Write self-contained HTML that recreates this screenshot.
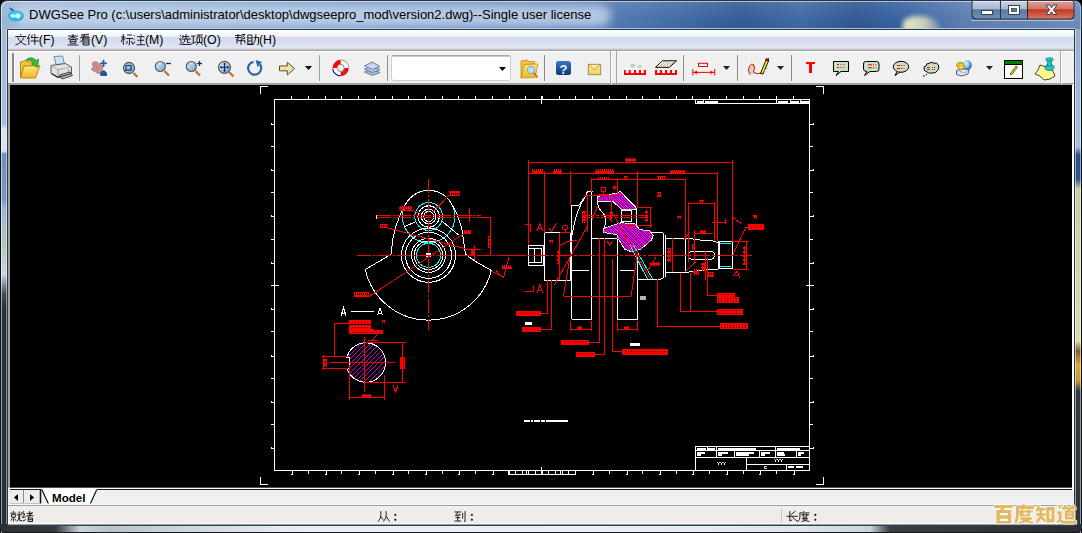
<!DOCTYPE html>
<html><head><meta charset="utf-8">
<style>
*{box-sizing:border-box}
html,body{margin:0;padding:0}
body{width:1082px;height:533px;overflow:hidden;position:relative;background:#000;font-family:"Liberation Sans",sans-serif}
.a{position:absolute}
#title{left:0;top:0;width:1082px;height:30px;border-radius:7px 7px 0 0;overflow:hidden;background:linear-gradient(90deg,#9ab4d6 0px,#86a4ce 200px,#6a8ec2 420px,#5a80b8 560px,#4670aa 650px,#2e5894 740px,#3c66a2 800px,#2c5490 855px,#3560a0 900px,#5a7cb0 965px,#6a88b8 1082px);border:1px solid #283548;border-bottom:none;box-shadow:inset 1px 1px 0 rgba(255,255,255,.55),inset -1px 0 0 rgba(255,255,255,.4)}
#title .hl{left:0;top:0;width:100%;height:100%;border-radius:7px 7px 0 0;background:linear-gradient(180deg,rgba(255,255,255,.12),rgba(255,255,255,.03) 60%,rgba(0,0,0,0))}
#ttext{left:29px;top:7px;font-size:13px;color:#000;white-space:nowrap;letter-spacing:0px}
#lframe{left:0;top:29px;width:8px;height:504px;background:linear-gradient(90deg,#0e1014 0,#0e1014 .8px,rgba(255,255,255,.55) .8px,rgba(255,255,255,.55) 1.9px,rgba(255,255,255,0) 1.9px,rgba(255,255,255,0) 5.8px,rgba(255,255,255,.45) 5.8px,rgba(255,255,255,.45) 7px,#223048 7px,#223048 8px),linear-gradient(180deg,#a2bcd9 0,#a6bedb 95px,#dce6f0 100px,#d8e2ee 122px,#7090b8 125px,#7a98c0 170px,#9ab8d8 180px,#b0c8b8 215px,#c6d6e4 245px,#444c54 265px,#283038 280px,#283038 504px)}
#rframe{left:1074px;top:29px;width:8px;height:504px;background:linear-gradient(90deg,#1a2028 0,#1a2028 .5px,rgba(255,255,255,.5) .5px,rgba(255,255,255,.5) 2px,rgba(255,255,255,0) 2px,rgba(255,255,255,0) 6px,rgba(255,255,255,.5) 6px,rgba(255,255,255,.5) 7.3px,#0e1014 7.3px),linear-gradient(180deg,#94aed0 0,#a9c0da 118px,#2c4f86 126px,#30558a 150px,#c9cda0 160px,#d8dab0 290px,#dcdcb0 312px,#806030 322px,#d8a838 336px,#c89830 352px,#343840 362px,#30343a 504px)}
#bframe{left:0;top:524px;width:1082px;height:9px;background:linear-gradient(90deg,#2c3036 0,#33383e 55px,#c8d2dc 80px,#b8c4cc 110px,#d0dae4 200px,#e8eef6 300px,#eaf0f8 600px,#dde6ee 800px,#c8d4de 870px,#3a3e44 890px,#2a2e34 1082px);border-radius:0 0 6px 6px;border-bottom:1.5px solid #15181c}
#client{left:7px;top:29px;width:1068px;height:497px;background:#f0f0f0;border:1px solid #2a3a55}
#menubar{left:8px;top:30px;width:1066px;height:19px;background:linear-gradient(180deg,#fff 0,#fbfcfe 2px,#eef1f8 7px,#d1d9ec 7.5px,#dfe6f5 18px)}
#menusep{left:8px;top:48px;width:1066px;height:3px;background:linear-gradient(180deg,#c5c9d6 0,#e8eaf0 1px,#a0a0a0 2px)}
#toolbar{left:8px;top:51px;width:1066px;height:33px;background:#f0f0f0;border-top:1px solid #fff}
.menu{top:31.5px;font-size:12.3px;color:#000;white-space:nowrap}
#canvas{left:8px;top:83px;width:1066px;height:405px;background:#000;border-left:2px solid #a0a0a0;border-top:2px solid #a0a0a0;border-right:2px solid #fff}
#tabbar{left:8px;top:488px;width:1066px;height:18px;background:#f0f0f0}
#status{left:8px;top:506px;width:1066px;height:19px;background:#f0eded;border-top:1px solid #a0a0a0}
.st{top:509px;font-size:12px;color:#000;white-space:nowrap}
#glow{left:12px;top:4px;width:598px;height:22px;border-radius:11px;background:rgba(200,216,236,.8);filter:blur(5px)}
#blob{left:902px;top:15px;width:36px;height:18px;border-radius:45% 60% 0 0;background:linear-gradient(90deg,rgba(245,242,200,.95),rgba(235,232,190,.8) 60%,rgba(200,210,200,.3));filter:blur(2.5px)}
</style></head><body>
<div id="title" class="a"><div class="hl a"></div><div id="glow" class="a"></div><div id="blob" class="a"></div></div>
<div id="ttext" class="a">DWGSee Pro (c:\users\administrator\desktop\dwgseepro_mod\version2.dwg)--Single user license</div>
<div id="lframe" class="a"></div>
<div id="rframe" class="a"></div>
<div id="bframe" class="a"></div>
<div id="client" class="a"></div>
<div class="a" style="left:7px;top:27.5px;width:1068px;height:1.3px;background:rgba(190,210,235,.85)"></div>
<div id="menubar" class="a"></div>
<div id="menusep" class="a"></div>
<div id="toolbar" class="a"></div>
<div id="canvas" class="a"></div>
<div id="tabbar" class="a"></div>
<div id="status" class="a"></div>

<svg class="a" style="left:0;top:0" width="1082" height="533" viewBox="0 0 1082 533">
<defs>
 <linearGradient id="gFold" x1="0" y1="0" x2="0" y2="1"><stop offset="0" stop-color="#ffe680"/><stop offset="1" stop-color="#f0b820"/></linearGradient>
 <linearGradient id="gLens" x1="0" y1="0" x2="1" y2="1"><stop offset="0" stop-color="#e8f2fa"/><stop offset="1" stop-color="#6b9cc8"/></linearGradient>
 <linearGradient id="gHelp" x1="0" y1="0" x2="0" y2="1"><stop offset="0" stop-color="#3a78c0"/><stop offset="1" stop-color="#0e3a78"/></linearGradient>
 <linearGradient id="gMail" x1="0" y1="0" x2="0" y2="1"><stop offset="0" stop-color="#fff2b0"/><stop offset="1" stop-color="#f0cc60"/></linearGradient>
 <pattern id="hatchY" width="3" height="3" patternUnits="userSpaceOnUse" patternTransform="rotate(45)"><rect width="1" height="3" fill="#a09010"/></pattern>
</defs>
<!-- toolbar grips/separators -->
<g stroke-width="1" shape-rendering="crispEdges">
 <line x1="12.5" y1="53" x2="12.5" y2="82" stroke="#8a8a8a" stroke-width="2"/>
 <line x1="14.5" y1="53" x2="14.5" y2="82" stroke="#fff"/>
 <line x1="79.5" y1="55" x2="79.5" y2="81" stroke="#a0a0a0"/>
 <line x1="319.5" y1="55" x2="319.5" y2="81" stroke="#a0a0a0"/>
 <line x1="387.5" y1="55" x2="387.5" y2="81" stroke="#8c8c8c"/>
 <line x1="544.5" y1="55" x2="544.5" y2="81" stroke="#8c8c8c"/>
 <line x1="610.5" y1="51" x2="610.5" y2="84" stroke="#a8a8a8"/>
 <line x1="611.5" y1="51" x2="611.5" y2="84" stroke="#fff"/>
 <line x1="616.5" y1="51" x2="616.5" y2="84" stroke="#a8a8a8"/>
 <line x1="683.5" y1="55" x2="683.5" y2="81" stroke="#8c8c8c"/>
 <line x1="737.5" y1="55" x2="737.5" y2="81" stroke="#8c8c8c"/>
 <line x1="791.5" y1="55" x2="791.5" y2="81" stroke="#8c8c8c"/>
 <line x1="1060.5" y1="51" x2="1060.5" y2="84" stroke="#a8a8a8"/>
 <line x1="1061.5" y1="51" x2="1061.5" y2="84" stroke="#fff"/>
</g>
<!-- open folder -->
<g>
 <path d="M20.5 62 L26 60.5 L29 62 L35 62 L36 66 L24 66 L20.5 78 Z" fill="#f2c43a" stroke="#b88a18" stroke-width="1"/>
 <path d="M24 66 L40 65.5 L35.5 78 L20.5 78 Z" fill="url(#gFold)" stroke="#b88a18" stroke-width="1"/>
 <path d="M26 60 Q31 55.5 36.5 60.5 L38.5 59 L37.5 67.5 L31.5 64 L34 62.5 Q31 59.5 26 60 Z" fill="#3cbf30" stroke="#1f8a20" stroke-width=".8"/>
</g>
<!-- printer -->
<g>
 <path d="M54 56.5 L62.5 56 L64.5 64 L56 64.5 Z" fill="#c8e0f8" stroke="#6a80a0" stroke-width=".9"/>
 <path d="M51 65.5 L65.5 63.5 L71.5 67 L71.5 74 L58 77.5 L51 73.5 Z" fill="#e4e4e4" stroke="#585858" stroke-width="1"/>
 <path d="M51.5 66 L58 69.5 L71 67.2" fill="none" stroke="#a8a8a8" stroke-width=".9"/>
 <path d="M58 69.5 L58 77.5" stroke="#8a8a8a" stroke-width=".9"/>
 <path d="M59.5 75 L70 72 L72.5 75.5 L62 79 Z" fill="#c8c8c8" stroke="#404040" stroke-width="1"/>
 <path d="M52 73.8 L58 77.3 L71 73.8" fill="none" stroke="#303030" stroke-width="1.1"/>
 <circle cx="68.5" cy="70.5" r=".9" fill="#30d030"/>
</g>
<!-- hand pan -->
<g>
 <path d="M92 63.5 Q94 60.5 97 62 L103 66.5 L101.5 73 L98 73.5 L92 70 Q90.5 68 93.5 68 Z" fill="#d09090" stroke="#a06060" stroke-width=".6"/>
 <path d="M93 63 L100 67 M92.5 65.5 L99.5 69 M92 68 L98 71" stroke="#b07070" stroke-width=".5"/>
 <path d="M101 71.5 L104 70 L107 73 L107 76 L100.5 76 L100 73.5 Z" fill="#1f5a9a"/>
 <path d="M103.5 60 L103.5 66.5 M100.5 63.3 L106.5 63.3" stroke="#1f5a9a" stroke-width="1.3"/>
 <path d="M103.5 59.5 L102 61.5 L105 61.5 Z M103.5 67 L102 65 L105 65 Z M100 63.3 L102 61.8 L102 64.8 Z M107 63.3 L105 61.8 L105 64.8 Z" fill="#1f5a9a"/>
</g>
<!-- zoom window -->
<g>
 <line x1="133.5" y1="73" x2="137.5" y2="77" stroke="#c07020" stroke-width="2.2"/>
 <circle cx="129" cy="68" r="5.5" fill="url(#gLens)" stroke="#505860" stroke-width="1.3"/>
 <rect x="126" y="65.5" width="5" height="4.5" fill="none" stroke="#1a3a78" stroke-width="1.3"/>
 <line x1="124.5" y1="71.5" x2="126.5" y2="69.5" stroke="#1a3a78" stroke-width="1"/>
</g>
<!-- zoom out -->
<g>
 <line x1="164.5" y1="71" x2="169" y2="75.5" stroke="#c07020" stroke-width="2.2"/>
 <circle cx="160.3" cy="66.5" r="5" fill="url(#gLens)" stroke="#585e66" stroke-width="1.2"/>
 <line x1="166" y1="63.5" x2="171" y2="63.5" stroke="#10306a" stroke-width="1.3"/>
</g>
<!-- zoom in -->
<g>
 <line x1="195.5" y1="71" x2="200" y2="75.5" stroke="#c07020" stroke-width="2.2"/>
 <circle cx="191.3" cy="66.5" r="5" fill="url(#gLens)" stroke="#585e66" stroke-width="1.2"/>
 <line x1="197" y1="63.5" x2="202" y2="63.5" stroke="#10306a" stroke-width="1.3"/>
 <line x1="199.5" y1="61" x2="199.5" y2="66" stroke="#10306a" stroke-width="1.3"/>
</g>
<!-- zoom pan -->
<g>
 <line x1="229" y1="72" x2="233.5" y2="76.5" stroke="#c07020" stroke-width="2.2"/>
 <circle cx="224.5" cy="67.3" r="6" fill="url(#gLens)" stroke="#585e66" stroke-width="1.2"/>
 <path d="M224.5 63 L224.5 71.5 M220.3 67.3 L228.7 67.3" stroke="#0a2a5a" stroke-width="1.1"/>
 <path d="M224.5 62.5 L223 64.3 L226 64.3 Z M224.5 72 L223 70.3 L226 70.3 Z M219.8 67.3 L221.6 65.8 L221.6 68.8 Z M229.2 67.3 L227.4 65.8 L227.4 68.8 Z" fill="#0a2a5a"/>
</g>
<!-- rotate -->
<g>
 <path d="M253.5 61.8 A6.5 6.5 0 1 0 260 64.5" fill="none" stroke="#2e64a0" stroke-width="2.2"/>
 <path d="M255.5 60 L262 62 L257.5 67 Z" fill="#2e64a0"/>
</g>
<!-- arrow -->
<g>
 <path d="M279.5 66 L287.3 66 L287.3 62.3 L294.5 68.5 L287.3 75 L287.3 70.8 L279.5 70.8 Z" fill="#ece4a8" stroke="#5a5020" stroke-width="1"/>
</g>
<!-- lifebuoy -->
<g>
 <circle cx="340.7" cy="67.9" r="5.9" fill="none" stroke="#fff" stroke-width="4.6"/>
 <path d="M332.6 67.9 A8.1 8.1 0 0 1 340.7 59.8 L340.7 64.2 A3.7 3.7 0 0 0 337 67.9 Z" fill="#f00"/>
 <path d="M348.8 67.9 A8.1 8.1 0 0 1 340.7 76 L340.7 71.6 A3.7 3.7 0 0 0 344.4 67.9 Z" fill="#f00"/>
 <path d="M332.7 68.5 A8 8 0 0 0 340.5 75.9" fill="none" stroke="#0000a0" stroke-width="1.1"/>
 <path d="M341 59.9 A8 8 0 0 1 348.7 67.5" fill="none" stroke="#909090" stroke-width="1"/>
 <circle cx="340.7" cy="67.9" r="3.6" fill="none" stroke="#707070" stroke-width=".8"/>
 <path d="M334.5 63 l2 -1.5 M343 73.5 l3 -3" stroke="#20a0a0" stroke-width=".9"/>
</g>
<!-- layers -->
<g stroke="#5a7090" stroke-width=".9" fill="#a8c0e0">
 <path d="M364.5 72 L372 69 L380 72.5 L372.5 75.5 Z"/>
 <path d="M364.5 69 L372 66 L380 69.5 L372.5 72.5 Z" fill="#b8cce8"/>
 <path d="M364.5 66 L372 62 L380 66.5 L372.5 69.5 Z" fill="#c8d8f0"/>
</g>
<!-- combo -->
<rect x="391.5" y="55.5" width="119" height="25" rx="2" fill="#fff" stroke="#c8d0dc"/>
<line x1="392" y1="55.8" x2="510" y2="55.8" stroke="#9a9a9a" stroke-width="1.2"/>
<!-- folder search -->
<g>
 <path d="M521 61 L527 60 L529 61.5 L534.5 61.5 L535 64 L525 64.5 L521 78 Z" fill="#f2c43a" stroke="#c09020" stroke-width=".8"/>
 <path d="M524.5 64.5 L538 64 L535 77.5 L521 78 Z" fill="url(#gFold)" stroke="#c09020" stroke-width=".8"/>
 <line x1="534" y1="73" x2="537.5" y2="77.5" stroke="#c07020" stroke-width="2"/>
 <circle cx="531" cy="70" r="3.6" fill="#bde0f5" stroke="#5aa0d0" stroke-width=".8"/>
</g>
<!-- help -->
<g>
 <rect x="556" y="61" width="15" height="14" rx="2.5" fill="url(#gHelp)"/>
 <text x="563.5" y="73.5" font-family="Liberation Sans" font-weight="bold" font-size="13" fill="#e8f4ff" text-anchor="middle">?</text>
</g>
<!-- mail -->
<g>
 <rect x="588.3" y="64.3" width="12.4" height="10.4" fill="url(#gMail)" stroke="#a08040" stroke-width=".9"/>
 <path d="M588.5 64.5 L594.5 70 L600.5 64.5" fill="none" stroke="#b08840" stroke-width=".8"/>
</g>
<!-- ruler 1 -->
<g fill="#f00">
 <path d="M624 70 L625.7 70 L625.7 73 L628.9 73 L628.9 70 L630.8 70 L630.8 73 L634 73 L634 70 L636 70 L636 73 L639 73 L639 70 L641 70 L641 73 L643.8 73 L643.8 70 L646 70 L646 75 L624 75 Z"/>
 <path d="M629.5 65.6 L632.5 63.3 L636 65.6 L632.5 68 Z M637 66.4 L639.6 64.8 L642.5 66.4 L639.6 68 Z" fill="#b8d4b8"/>
</g>
<!-- ruler 2 -->
<g>
 <path d="M655 70 L657 70 L657 73 L660 73 L660 70 L662 70 L662 73 L665 73 L665 70 L667 70 L667 73 L670 73 L670 70 L672 70 L672 73 L675 73 L675 70 L677 70 L677 75 L655 75 Z" fill="#f00"/>
 <path d="M662.5 60.8 L676.5 60.8 L669.5 67.3 L655.5 67.3 Z" fill="#fff" stroke="#000" stroke-width="1"/>
 <path d="M660 66.5 L665 61.5 M663 66.5 L668 61.5 M666 66.5 L671 61.5 M669 66.5 L674 61.5" stroke="#a09010" stroke-width=".9"/>
</g>
<!-- dimension -->
<g stroke="#f00" fill="none">
 <rect x="698.5" y="63.3" width="9" height="3.2" stroke-width="1"/>
 <line x1="693" y1="72.4" x2="714.5" y2="72.4" stroke-width="1"/>
 <line x1="692.8" y1="69" x2="692.8" y2="75.5" stroke-width="1"/>
 <line x1="714.7" y1="69" x2="714.7" y2="75.5" stroke-width="1"/>
 <path d="M693.5 72.4 L697 70.5 L697 74.3 Z M714 72.4 L710.5 70.5 L710.5 74.3 Z" fill="#f00" stroke="none"/>
</g>
<!-- sketch pen -->
<g>
 <path d="M750 74.5 Q747 71 749.5 66 Q752 62.5 754 65 Q755 70 753.5 72 Q757 75 761 73" fill="#c0dcc0" stroke="#f00" stroke-width="1"/>
 <path d="M760.5 73.5 L766 60 L768.5 61 L763 74 Z" fill="#f5f000" stroke="#000" stroke-width=".9"/>
 <path d="M765.5 59 L768.8 58.5 L768.5 61 L766 60 Z" fill="#f00" stroke="#000" stroke-width=".6"/>
 <line x1="763.5" y1="71" x2="767.5" y2="68" stroke="#a0a0a0" stroke-width="1"/>
</g>
<!-- T -->
<path d="M806 62 L815 62 L815 64 L812 64 L812 73 L809 73 L809 64 L806 64 Z" fill="#f00"/>
<!-- bubble 1 -->
<g>
 <path d="M833.5 61.5 L848.5 61.5 L848.5 71.5 L841 71.5 L836 75.5 L838.5 71.5 L833.5 71.5 Z" fill="#c6e2c6" stroke="#000" stroke-width="1"/>
 <g fill="#f00"><rect x="837" y="64" width="2" height="1"/><rect x="840.5" y="64" width="1" height="1"/><rect x="843.5" y="64" width="1" height="1"/><rect x="837" y="67" width="2" height="1"/><rect x="840.5" y="67" width="1" height="1"/><rect x="843.5" y="67" width="1" height="1"/></g>
</g>
<!-- bubble 2 -->
<g>
 <path d="M865.5 61.5 L876.5 61.5 Q879 61.5 879 64 L879 69 Q879 71.5 876.5 71.5 L870 71.5 L864.5 75.5 L867 71.5 Q863.5 71.5 863.5 69 L863.5 64 Q863.5 61.5 865.5 61.5 Z" fill="#c6e2c6" stroke="#000" stroke-width="1"/>
 <g fill="#f00"><rect x="868" y="64.3" width="4" height="1"/><rect x="873" y="64.3" width="1" height="1"/><rect x="875.5" y="64.3" width="1" height="1"/><rect x="868" y="67.3" width="4" height="1"/><rect x="873" y="67.3" width="1" height="1"/><rect x="875.5" y="67.3" width="1" height="1"/></g>
</g>
<!-- bubble 3 -->
<g>
 <ellipse cx="901" cy="66.8" rx="7.7" ry="5.5" fill="#c6e2c6" stroke="#000" stroke-width="1"/>
 <path d="M897 71.5 L895 75.5 L900 72" fill="#c6e2c6" stroke="#000" stroke-width="1"/>
 <g fill="#f00"><rect x="897" y="65" width="3" height="1"/><rect x="901" y="65" width="1" height="1"/><rect x="903.5" y="65" width="1" height="1"/><rect x="897" y="68" width="3" height="1"/><rect x="901" y="68" width="1" height="1"/><rect x="903.5" y="68" width="1" height="1"/></g>
</g>
<!-- cloud -->
<g>
 <path d="M926 66 Q926 63 929 63.5 Q931 61.5 933.5 63 Q937 62.5 938.5 65 Q939.5 68 937.5 70.5 Q936 73.5 932 73 Q929.5 74 927 72 Q923.5 71 924 68 Q923.5 66.5 926 66 Z" fill="#c6e2c6" stroke="#000" stroke-width="1"/>
 <g fill="#f00"><rect x="927" y="67" width="3" height="1"/><rect x="932" y="67" width="1" height="1"/><rect x="934" y="67" width="1" height="1"/><rect x="927" y="69" width="3" height="1"/><rect x="932" y="69" width="1" height="1"/><rect x="934" y="69" width="1" height="1"/></g>
 <circle cx="926.5" cy="74.5" r=".7" fill="#000"/><circle cx="924" cy="76" r=".8" fill="#000"/>
</g>
<!-- stamp globe -->
<g>
 <defs><radialGradient id="gGlobe" cx=".35" cy=".35" r=".7"><stop offset="0" stop-color="#e8fcff"/><stop offset=".5" stop-color="#70c8f0"/><stop offset="1" stop-color="#1a5a80"/></radialGradient></defs>
 <ellipse cx="967.3" cy="65.2" rx="4.4" ry="5" fill="url(#gGlobe)"/>
 <path d="M956.5 70.5 L963 68.5 L969 70 L968 74 L962 76 L956.5 74.5 Z" fill="#e0e6f4" stroke="#404a80" stroke-width=".9"/>
 <path d="M959 71 L963.5 73 L967.5 71.5" fill="none" stroke="#8090b8" stroke-width=".7"/>
 <path d="M957 63.5 L960 62 L962 62.5 L964 63.5 L964.5 66.5 L963.5 69.5 L960.5 70 L958 68 L956.5 66 Z" fill="#e0b818" stroke="#a07a08" stroke-width=".6"/>
 <path d="M959.8 64.5 h.9 M962 64.5 h.9 M959.5 66.8 q1.7 1 3.3 0" stroke="#fff" stroke-width=".9" fill="none"/>
</g>
<!-- green box -->
<g>
 <rect x="1004.5" y="60.5" width="18" height="18" fill="#fff" stroke="#000" stroke-width="1"/>
 <rect x="1005" y="61" width="17" height="3" fill="#008000"/>
 <line x1="1005" y1="64.5" x2="1022" y2="64.5" stroke="#000" stroke-width="1"/>
 <path d="M1010.5 73.5 L1016 66 L1017.5 67 L1012 74.5 Z" fill="#f0e000" stroke="#000" stroke-width=".6"/>
 <path d="M1010 75 L1010.5 73.5 L1012 74.5 Z" fill="#f00"/>
</g>
<!-- pushpin note -->
<g>
 <path d="M1040 65 L1046 67 L1053 71 L1055 76 L1050 79 L1044 80 L1040 76 L1035 74 L1038 70 Z" fill="#fafa90" stroke="#000" stroke-width=".7"/>
 <ellipse cx="1049.5" cy="67.5" rx="4.5" ry="3" fill="#20c8c8" stroke="#006060" stroke-width=".7"/>
 <rect x="1047.5" y="60" width="4" height="6" fill="#20c8c8" stroke="#006060" stroke-width=".6"/>
 <ellipse cx="1049.5" cy="59.5" rx="3.8" ry="1.8" fill="#20c8c8" stroke="#006060" stroke-width=".6"/>
</g>
<!-- dropdown triangles -->
<g fill="#000">
 <path d="M305 66 L312 66 L308.5 70 Z"/>
 <path d="M499 67 L506 67 L502.5 71 Z"/>
 <path d="M723 66 L730 66 L726.5 70 Z" fill="#222"/>
 <path d="M777 66 L784 66 L780.5 70 Z" fill="#222"/>
 <path d="M986 66 L993 66 L989.5 70 Z" fill="#222"/>
</g>
</svg>
<svg class="a" style="left:960px;top:0" width="122" height="30" viewBox="960 0 122 30">
<defs>
 <linearGradient id="gBtn" x1="0" y1="0" x2="0" y2="1"><stop offset="0" stop-color="#c4d2e4"/><stop offset=".45" stop-color="#a8bad2"/><stop offset=".5" stop-color="#5c7aa2"/><stop offset="1" stop-color="#6e8cb4"/></linearGradient>
 <linearGradient id="gClose" x1="0" y1="0" x2="0" y2="1"><stop offset="0" stop-color="#e0a098"/><stop offset=".45" stop-color="#d07868"/><stop offset=".5" stop-color="#c03820"/><stop offset="1" stop-color="#d87860"/></linearGradient>
</defs>
<path d="M971.5 0.5 L1074.5 0.5 L1074.5 15 Q1074.5 19.5 1070 19.5 L976 19.5 Q971.5 19.5 971.5 15 Z" fill="#2a3448"/>
<path d="M972.5 1 L1000 1 L1000 18.5 L977 18.5 Q972.5 18.5 972.5 14 Z" fill="url(#gBtn)"/>
<path d="M1001 1 L1027 1 L1027 18.5 L1001 18.5 Z" fill="url(#gBtn)"/>
<path d="M1028 1 L1073.5 1 L1073.5 14 Q1073.5 18.5 1069 18.5 L1028 18.5 Z" fill="url(#gClose)"/>
<path d="M974 1.5 L999.5 1.5 M1001.5 1.5 L1026.5 1.5 M1028.5 1.5 L1072 1.5" stroke="rgba(255,255,255,.7)" stroke-width="1"/>
<line x1="1000.5" y1="1" x2="1000.5" y2="19" stroke="#2a3448"/>
<line x1="1027.5" y1="1" x2="1027.5" y2="19" stroke="#3a2020"/>
<rect x="981.5" y="10.5" width="11" height="4" fill="#fff" stroke="#3a4050" stroke-width="1"/>
<rect x="1008.5" y="5.5" width="11" height="9" fill="#fff" stroke="#3a4050" stroke-width="1"/>
<rect x="1011.5" y="8.5" width="5" height="3" fill="#6080a8" stroke="#3a4050" stroke-width=".8"/>
<path d="M1046 5 L1049.6 5 L1051.5 7.8 L1053.4 5 L1057 5 L1053.4 9.8 L1057 14.5 L1053.4 14.5 L1051.5 11.8 L1049.6 14.5 L1046 14.5 L1049.6 9.8 Z" fill="#fff" stroke="#404048" stroke-width="1"/>
<path d="M971.5 19.5 L1074.5 19.5" stroke="rgba(255,255,255,.5)" stroke-width="1" transform="translate(0,1)"/>
</svg>
<svg class="a" style="left:6px;top:6px" width="20" height="18" viewBox="6 6 20 18">
 <line x1="10.5" y1="8.5" x2="15" y2="12.5" stroke="#3060d0" stroke-width="2" stroke-linecap="round"/>
 <ellipse cx="16" cy="16" rx="8" ry="5.5" fill="#28b8e8"/>
 <ellipse cx="16" cy="15" rx="6" ry="3" fill="#60d0f0" opacity=".7"/>
 <path d="M10.5 16 L20 16 M12 14 L12 18 M14 14.5 Q15.5 16 14 17.5 M18 13.5 L18 18.5" stroke="#fff" stroke-width="1.1" fill="none"/>
 <circle cx="18" cy="16" r="1.8" fill="none" stroke="#fff" stroke-width="1"/>
</svg>
<svg class="a" style="left:0;top:0" width="1082" height="533" viewBox="0 0 1082 533" shape-rendering="crispEdges">
<defs><pattern id="txtpat" width="3" height="2.4" patternUnits="userSpaceOnUse"><rect x="1" y="0.6" width="1" height="1.1" fill="#000"/></pattern><pattern id="txtpat2" width="2" height="4" patternUnits="userSpaceOnUse"><rect x="0" y="0" width="1" height="4" fill="#f00"/><rect x="1" y="0" width="1" height="1" fill="#f00"/><rect x="1" y="3" width="1" height="1" fill="#f00"/></pattern></defs>
<g id="frame" fill="none" stroke="#fff" stroke-width="1">
 <rect x="274.5" y="99.5" width="535" height="371"/>
 <path d="M260.5 93.5 V86.5 H268"/>
 <path d="M816 86.5 H823.5 V94"/>
 <path d="M260.5 477 V484.5 H268"/>
 <path d="M816 484.5 H823.5 V477"/>
 <g id="ticks"><path d="M308.5 96.0 V99.5 M308.5 470.5 V474.0 M341.5 96.0 V99.5 M341.5 470.5 V474.0 M375.5 96.0 V99.5 M375.5 470.5 V474.0 M408.5 96.0 V99.5 M408.5 470.5 V474.0 M442.5 96.0 V99.5 M442.5 470.5 V474.0 M475.5 96.0 V99.5 M475.5 470.5 V474.0 M509.5 96.0 V99.5 M509.5 470.5 V474.0 M542.5 96.0 V99.5 M542.5 470.5 V474.0 M575.5 96.0 V99.5 M575.5 470.5 V474.0 M609.5 96.0 V99.5 M609.5 470.5 V474.0 M642.5 96.0 V99.5 M642.5 470.5 V474.0 M676.5 96.0 V99.5 M676.5 470.5 V474.0 M709.5 96.0 V99.5 M709.5 470.5 V474.0 M743.5 96.0 V99.5 M743.5 470.5 V474.0 M776.5 96.0 V99.5 M776.5 470.5 V474.0 M290.5 96.0 L291.5 96.0 V99.5 M290.5 474.0 H292.5 V470.5 M324.5 96.0 L325.5 96.0 V99.5 M324.5 474.0 H326.5 V470.5 M357.5 96.0 L358.5 96.0 V99.5 M357.5 474.0 H359.5 V470.5 M391.5 96.0 L392.5 96.0 V99.5 M391.5 474.0 H393.5 V470.5 M424.5 96.0 L425.5 96.0 V99.5 M424.5 474.0 H426.5 V470.5 M457.5 96.0 L458.5 96.0 V99.5 M457.5 474.0 H459.5 V470.5 M491.5 96.0 L492.5 96.0 V99.5 M491.5 474.0 H493.5 V470.5 M524.5 96.0 L525.5 96.0 V99.5 M524.5 474.0 H526.5 V470.5 M558.5 96.0 L559.5 96.0 V99.5 M558.5 474.0 H560.5 V470.5 M591.5 96.0 L592.5 96.0 V99.5 M591.5 474.0 H593.5 V470.5 M625.5 96.0 L626.5 96.0 V99.5 M625.5 474.0 H627.5 V470.5 M658.5 96.0 L659.5 96.0 V99.5 M658.5 474.0 H660.5 V470.5 M691.5 96.0 L692.5 96.0 V99.5 M691.5 474.0 H693.5 V470.5 M725.5 96.0 L726.5 96.0 V99.5 M725.5 474.0 H727.5 V470.5 M758.5 96.0 L759.5 96.0 V99.5 M758.5 474.0 H760.5 V470.5 M792.5 96.0 L793.5 96.0 V99.5 M792.5 474.0 H794.5 V470.5 M271.0 146.5 H274.5 M809.5 146.5 H813.0 M271.0 192.5 H274.5 M809.5 192.5 H813.0 M271.0 239.5 H274.5 M809.5 239.5 H813.0 M271.0 285.5 H274.5 M809.5 285.5 H813.0 M271.0 331.5 H274.5 M809.5 331.5 H813.0 M271.0 378.5 H274.5 M809.5 378.5 H813.0 M271.0 424.5 H274.5 M809.5 424.5 H813.0 M271.0 122.5 V124.5 H274.5 M813.0 122.5 V124.5 H809.5 M271.0 168.5 V170.5 H274.5 M813.0 168.5 V170.5 H809.5 M271.0 214.5 V216.5 H274.5 M813.0 214.5 V216.5 H809.5 M271.0 261.5 V263.5 H274.5 M813.0 261.5 V263.5 H809.5 M271.0 307.5 V309.5 H274.5 M813.0 307.5 V309.5 H809.5 M271.0 354.5 V356.5 H274.5 M813.0 354.5 V356.5 H809.5 M271.0 400.5 V402.5 H274.5 M813.0 400.5 V402.5 H809.5 M271.0 446.5 V448.5 H274.5 M813.0 446.5 V448.5 H809.5 M541.5 96 V103.5 M541.5 467 V474.5 M270.5 285.5 H278.5 M805.5 285.5 H813.5"/><path d="M508.5 470.5 V474.5 H575.5 V470.5 M515.5 470.5 V474.5 M522.5 470.5 V474.5 M528.5 470.5 V474.5 M535.5 470.5 V474.5 M542.5 470.5 V474.5 M548.5 470.5 V474.5 M555.5 470.5 V474.5 M562.5 470.5 V474.5 M568.5 470.5 V474.5"/></g>
</g>














<!--BODY--><!-- title blocks -->
<g fill="none" stroke="#fff" stroke-width="1">
 <path d="M695.5 99.5 V103.8 H809.5 M703.5 99.5 V103.8 M776.5 99.5 V103.8 M790.5 99.5 V103.8 M800.5 99.5 V103.8"/>
 <path d="M695.5 470.5 V446.5 H809.5 M695.5 450.5 H809.5 M695.5 457.5 H809.5 M746.5 464.5 H809.5 M746.5 457.5 V470.5 M786.5 464.5 V470.5"/>
 <path d="M707.5 446.5 V450.5 M716.5 446.5 V457.5 M775.5 446.5 V457.5 M734.5 450.5 V457.5 M759.5 450.5 V457.5 M796.5 450.5 V457.5"/>
</g>
<g fill="#fff">
 <rect x="697" y="101" width="6" height="2"/><rect x="705" y="101" width="13" height="2"/><rect x="778" y="101" width="10" height="2"/><rect x="791" y="101" width="8" height="2"/><rect x="801" y="101" width="8" height="2"/>
 <rect x="697" y="448" width="9" height="2"/><rect x="708" y="448" width="7" height="2"/><rect x="718" y="448" width="38" height="2"/><rect x="777" y="448" width="23" height="2"/>
 <rect x="697" y="452" width="8" height="2"/><rect x="697" y="454" width="4" height="2"/><rect x="718" y="452" width="10" height="2"/><rect x="718" y="454" width="4" height="2"/>
 <rect x="736" y="452" width="18" height="2"/><rect x="736" y="454" width="13" height="2"/><rect x="761" y="452" width="9" height="2"/><rect x="761" y="454" width="4" height="2"/>
 <rect x="777" y="452" width="7" height="2"/><rect x="777" y="454" width="8" height="2"/><rect x="798" y="452" width="6" height="2"/><rect x="798" y="454" width="3" height="2"/>
 <rect x="788" y="466" width="6" height="2"/><rect x="796" y="466" width="7" height="2"/>
</g>
<g fill="none" stroke="#fff" stroke-width=".8">
 <path d="M717.5 461.5 l2 3 m0 -3 l-2 3 M720.5 461.5 l2 3 m0 -3 l-2 3 M723.5 461.5 l2 3 m0 -3 l-2 3"/>
 <path d="M774.5 458.5 l2 3 m0 -3 l-2 3 M777.5 458.5 l2 3 m0 -3 l-2 3 M780.5 458.5 l2 3 m0 -3 l-2 3"/>
 <path d="M766.5 466 h-2 v2.5 h2"/>
</g>
<!-- bottom center note -->
<g fill="#fff"><rect x="524" y="420" width="6" height="1.6"/><rect x="531" y="420" width="2" height="1.6"/><rect x="534" y="420" width="6" height="1.6"/><rect x="541" y="420" width="4" height="1.6"/><rect x="546" y="420" width="22" height="1.8"/></g>

<!-- ================= SIDE VIEW ================= -->
<g fill="none" stroke="#00ffff" stroke-width="1">
 <circle cx="428.7" cy="216.5" r="26.2"/>
 <circle cx="428.7" cy="216.5" r="13.9"/>
 <circle cx="428.5" cy="255.3" r="12"/>
</g>
<g fill="none" stroke="#fff" stroke-width="1">
 <!-- outer profile -->
 <path d="M365.3 269.6 L391 254.3 L392.8 239 L396 226 L401 213 L405.0 205.4 L407.2 201.5 L410.2 198.0 L413.7 195.0 L417.6 192.8 L421.9 191.2 L426.4 190.4 L431.0 190.4 L435.5 191.2 L439.8 192.8 L443.7 195.0 L447.2 198.0 L450.2 201.5 L452.4 205.4 L457 214 L461.5 227 L463.5 240 L465.5 254.3 L474.7 260.9 L491.2 270.4"/>
 <path d="M365.3 269.6 A64.6 64.6 0 0 0 491.2 270.4"/>
 <!-- circles around upper pin -->
 <circle cx="428.7" cy="216.5" r="10.7"/>
 <circle cx="428.7" cy="216.5" r="7.3"/>
 <circle cx="428.7" cy="216.5" r="5"/>
 <!-- circles around main journal -->
 <circle cx="428.5" cy="255.3" r="27"/>
 <circle cx="428.5" cy="255.3" r="23"/>
 <circle cx="428.5" cy="255.3" r="17"/>
 <circle cx="428.5" cy="255.3" r="14.3"/>
 <!-- chords -->
 <path d="M404.5 226.7 L414.6 222.2 M441.9 221.1 L458.7 235"/>
 <path d="M376.5 214.5 v4"/>
 <!-- A-A label -->
 <path d="M341 315.5 L343.5 308 L346 315.5 M342 313 H345 M377.5 315.5 L380 308 L382.5 315.5 M378.5 313 H381.5"/>
 <path d="M350.5 311.6 H374"/>
</g>
<rect x="426" y="253" width="5" height="4" fill="#fff"/>
<g fill="none" stroke="#f00" stroke-width="1">
 <path d="M428.6 179 V330" stroke-dasharray="14 2 2 2"/>
 <path d="M376.5 215.6 H480.7" stroke-dasharray="14 2 2 2"/>
 <path d="M376.5 217.6 H492.5" stroke-dasharray="14 2 2 2"/>
 <path d="M356.5 255.5 H510.7" stroke-dasharray="14 2 2 2"/>
 <path d="M490.3 217.6 V255.5"/>
 <path d="M469 208 v14 M466 215 h6"/>
 <path d="M474.5 245 V260 M465 249.4 H480.8"/>
 <path d="M388 228 L467.8 249.4"/>
 <path d="M412 210 L420 213.5 M399 210 H412"/>
 <path d="M369.7 296.3 L464.1 233.5 H471 M354 296.5 H369.7"/>
 <path d="M449 195 L432 213 M449 195 H460"/>
 <path d="M491.2 271 L504 277.7 M509 256.9 L503.4 278.3 M496 270 L500 276"/>
 <path d="M374 329.5 H349"/>
</g>
<g fill="#f00">
 <g><rect x="399" y="206" width="13" height="4" fill="url(#txtpat2)"/><rect x="380" y="224" width="8" height="4" fill="url(#txtpat2)"/><rect x="449" y="191" width="11" height="4" fill="url(#txtpat2)"/><rect x="464" y="229.5" width="7" height="4" fill="url(#txtpat2)"/><rect x="487.5" y="236" width="3.5" height="12" fill="url(#txtpat2)"/><rect x="502" y="265" width="10" height="4" fill="url(#txtpat2)"/></g>
 <rect x="471" y="250" width="3" height="6"/>
</g>

<!-- ================= SECTION A-A ================= -->
<g>
 <clipPath id="secClip"><path d="M346.9 357.2 H349.5 V368.6 H347.1 A19.7 19.7 0 1 0 346.9 357.2 Z"/></clipPath>
 <g clip-path="url(#secClip)" stroke="#ff00ff" stroke-width=".75">
  <path d="M300.0 400 L380.0 320 M304.6 400 L384.6 320 M309.2 400 L389.2 320 M313.8 400 L393.8 320 M318.4 400 L398.4 320 M323.0 400 L403.0 320 M327.6 400 L407.6 320 M332.2 400 L412.2 320 M336.8 400 L416.8 320 M341.4 400 L421.4 320 M346.0 400 L426.0 320 M350.6 400 L430.6 320 M355.2 400 L435.2 320 M359.8 400 L439.8 320 M364.4 400 L444.4 320 M369.0 400 L449.0 320 M373.6 400 L453.6 320 M378.2 400 L458.2 320 M382.8 400 L462.8 320 M387.4 400 L467.4 320 M392.0 400 L472.0 320 M396.6 400 L476.6 320 M401.2 400 L481.2 320 M405.8 400 L485.8 320 M410.4 400 L490.4 320 M415.0 400 L495.0 320 M419.6 400 L499.6 320 M424.2 400 L504.2 320 M428.8 400 L508.8 320 M433.4 400 L513.4 320"/>
 </g>
 <path d="M346.9 357.2 H349.5 V368.6 H347.1 A19.7 19.7 0 1 0 346.9 357.2 Z" fill="none" stroke="#fff" stroke-width="1"/>
</g>
<g fill="none" stroke="#f00" stroke-width="1">
 <path d="M364.7 337 V392 M330 362.4 H395"/>
 <path d="M364 342.3 H406 M364 382.6 H406 M402.9 342.3 V382.6"/>
 <path d="M349.2 365 V400 M384.3 375 V400 M349.2 397 H384.3"/>
 <path d="M322.4 356.8 H348 M322.4 368 H348 M323.5 355 V370"/>
 <path d="M334.8 323.3 H349 M334.8 323.3 V357"/>
 <path d="M371 341 L378 334 M368 340 H378"/>
 <path d="M393 385 L395.6 392 L398 385 M393.5 388.5 H397.5"/>
</g>
<g fill="#f00">
 <rect x="349" y="320" width="22" height="4"/><rect x="350" y="321" width="20" height="2" fill="url(#txtpat)"/>
 <rect x="349" y="325" width="22" height="4"/><rect x="350" y="326" width="20" height="2" fill="url(#txtpat)"/>
 <rect x="349" y="330" width="34" height="4"/><rect x="350" y="331" width="32" height="2" fill="url(#txtpat)"/>
 <rect x="400" y="356.5" width="5" height="12"/><rect x="401.5" y="357.7" width="2" height="9.6" fill="url(#txtpat)"/>
 <rect x="362" y="393.5" width="9" height="3" fill="url(#txtpat2)"/>
 <rect x="323" y="358.5" width="3.5" height="8" fill="url(#txtpat2)"/>
 <rect x="382" y="320" width="3" height="3" fill="url(#txtpat2)"/>
</g>
<!-- ================= FRONT VIEW ================= -->
<g clip-path="url(#noclip)">
<path d="M597.5 196.5 L617.8 193 L620 191.2 L635.5 207 L636 209.5 L621.5 209.5 L612.5 201 L597.5 201 Z" fill="#f000f0" stroke="#fff" stroke-width="1"/>
<path d="M604 228.4 L614 225 L621.5 222.7 L627.5 223.5 L635 224 L639.5 229.5 L650 231 L653 235.5 L651.5 240 L641 249 L632 252 L624.5 249 L618 238 L617 234.7 L603.5 232.5 Z" fill="#f000f0" stroke="#fff" stroke-width="1"/>
<clipPath id="pinClip"><path d="M597.5 196.5 L617.8 193 L620 191.2 L635.5 207 L636 209.5 L621.5 209.5 L612.5 201 L597.5 201 Z M604 228.4 L614 225 L621.5 222.7 L627.5 223.5 L635 224 L639.5 229.5 L650 231 L653 235.5 L651.5 240 L641 249 L632 252 L624.5 249 L618 238 L617 234.7 L603.5 232.5 Z"/></clipPath>
<g clip-path="url(#pinClip)" stroke="#000" stroke-width=".65"><path d="M482.0 185 L562.0 265 M484.6 185 L564.6 265 M487.2 185 L567.2 265 M489.8 185 L569.8 265 M492.4 185 L572.4 265 M495.0 185 L575.0 265 M497.6 185 L577.6 265 M500.2 185 L580.2 265 M502.8 185 L582.8 265 M505.4 185 L585.4 265 M508.0 185 L588.0 265 M510.6 185 L590.6 265 M513.2 185 L593.2 265 M515.8 185 L595.8 265 M518.4 185 L598.4 265 M521.0 185 L601.0 265 M523.6 185 L603.6 265 M526.2 185 L606.2 265 M528.8 185 L608.8 265 M531.4 185 L611.4 265 M534.0 185 L614.0 265 M536.6 185 L616.6 265 M539.2 185 L619.2 265 M541.8 185 L621.8 265 M544.4 185 L624.4 265 M547.0 185 L627.0 265 M549.6 185 L629.6 265 M552.2 185 L632.2 265 M554.8 185 L634.8 265 M557.4 185 L637.4 265 M560.0 185 L640.0 265 M562.6 185 L642.6 265 M565.2 185 L645.2 265 M567.8 185 L647.8 265 M570.4 185 L650.4 265 M573.0 185 L653.0 265 M575.6 185 L655.6 265 M578.2 185 L658.2 265 M580.8 185 L660.8 265 M583.4 185 L663.4 265 M586.0 185 L666.0 265 M588.6 185 L668.6 265 M591.2 185 L671.2 265 M593.8 185 L673.8 265 M596.4 185 L676.4 265 M599.0 185 L679.0 265 M601.6 185 L681.6 265 M604.2 185 L684.2 265 M606.8 185 L686.8 265 M609.4 185 L689.4 265 M612.0 185 L692.0 265 M614.6 185 L694.6 265 M617.2 185 L697.2 265 M619.8 185 L699.8 265 M622.4 185 L702.4 265 M625.0 185 L705.0 265 M627.6 185 L707.6 265 M630.2 185 L710.2 265 M632.8 185 L712.8 265 M635.4 185 L715.4 265 M638.0 185 L718.0 265 M640.6 185 L720.6 265 M643.2 185 L723.2 265 M645.8 185 L725.8 265 M648.4 185 L728.4 265 M651.0 185 L731.0 265 M653.6 185 L733.6 265 M656.2 185 L736.2 265 M658.8 185 L738.8 265 M661.4 185 L741.4 265 M664.0 185 L744.0 265 M666.6 185 L746.6 265 M669.2 185 L749.2 265 M671.8 185 L751.8 265 M674.4 185 L754.4 265 M677.0 185 L757.0 265 M679.6 185 L759.6 265 M682.2 185 L762.2 265 M684.8 185 L764.8 265 M687.4 185 L767.4 265"/></g>
</g>
<g fill="none" stroke="#fff" stroke-width="1">
 <rect x="528.4" y="245" width="15.5" height="20.7"/>
 <path d="M528.4 248.5 H541 V262.5 H528.4 M534.6 249 V262"/>
 <rect x="544.5" y="232.7" width="26.3" height="47.4"/>
 <path d="M571.5 319 V205.4 H578.8 L585.5 196 L587.5 191.5 H592.5 M591.7 191.5 V319 M571.5 319 H591.7 M572 270.5 H589"/>
 <path d="M585.5 196 Q577 210 574 225 L571.5 238"/>
 <path d="M597.5 201 Q597.5 208 603 213 Q607 218 605.5 224 L603.5 229.5"/>
 <path d="M591.7 238.5 H616.5 M617.6 238.5 V319 H637.6 V250.9 M620.4 270.6 H634.5"/>
 <path d="M637 279 H661 Q663.7 279 663.7 276 V235 Q663.7 232.3 661 232.3 H651.4 M665 235 V276.5"/>
 <path d="M665 238.6 H685.1 V272.5 H665"/>
 <path d="M685.1 238.6 H690.3 L701.6 240.3 L712.8 241 L718 242.5 M718 269 L712 269.5 L700 270.5 L685.1 272.5 M719.4 242 V268.5"/>
 <rect x="688.3" y="251.3" width="26.3" height="8" rx="4"/>
 <rect x="718.6" y="241.7" width="13.5" height="27.2"/>
 <rect x="621.5" y="210" width="9.8" height="11.3"/>
 <path d="M636.5 207.7 V225"/>
</g>
<g stroke="#00ffff" stroke-width="1" fill="none">
 <path d="M719.5 243.8 H731.2 M719.5 266.8 H731.2"/>
 <path d="M630 245 L647.4 279 M633.5 245 L652.5 279"/>
</g>
<g fill="none" stroke="#f00" stroke-width="1">
 <path d="M528.3 162.3 H732.7 M528.3 173.1 H717.5 M591 179.8 H685.4 M688.5 203.5 H714.6"/>
 <path d="M528.3 160 V245 M544.4 171 V232.7 M570.6 171 V205 M591 178 V191.5 M617.5 178 V193 M637.8 171 V207 M685.4 179 V238.6 M688.5 202 V238.6 M714.6 202 V241 M717.5 172 V241 M732.7 160 V241.7"/>
 <path d="M510 255.3 H752" stroke-dasharray="16 2 3 2"/>
 <path d="M582 215.6 H648 M582 217.6 H648" stroke-dasharray="12 2 3 2"/>
 <path d="M587.8 195.5 V232 M585 195.5 H620 M611.5 201 V222 M592 220 L597.5 206"/>
 <path d="M636.5 207.7 H651.5 M650 207.7 V228 M636.5 225 H651.5"/>
 <path d="M612 212 L650.5 279"/>
 <path d="M599.6 238 V342 H588.3 M604.7 238 V354.3 H594.5 M612.5 258.7 V351.5 H622.4"/>
 <path d="M547 280 V313 H541 M551.7 280 V329 H541"/>
 <path d="M563.5 296.5 H631 M563.5 296.5 L570.8 252 M631 296.3 L638 250"/>
 <path d="M554.2 285.3 L587.3 226.5 M559.4 246 Q568 240 577 241"/>
 <path d="M559.5 232.7 V280"/>
 <path d="M570.8 329.5 H591.4 M570.8 321 V331 M591.4 321 V331 M617.5 329.5 H637.6 M617.5 321 V331 M637.6 321 V331"/>
 <path d="M657.4 279 V326.3 H720 M680.5 272.5 V311.8 H717 M690.4 272.5 V311.8 M707 258 V295.3 H717"/>
 <path d="M746.5 241 V269 M732.5 241.5 H749 M732.5 269 H749"/>
 <path d="M733 254.5 L745.7 227.4 H764 M732.7 217.5 L741 223.4"/>
 <path d="M647.4 271.1 L656.4 256.5 M672.2 238 V272 M688.9 230 V262 M694.5 230 V262 M705.3 251 V280 M684.7 272.2 L695.5 261.9"/>
 <path d="M712 222 H727 M725 219 V224 M695 233 H713 M683 240 L690 232"/>
 <path d="M525.3 224.6 H530 V232 M525 291 H533 V285"/>
 <path d="M537 231 L539.8 223.5 L542.6 231 M538 228.5 H541.6 M537 292.5 L539.8 285 L542.6 292.5 M538 290 H541.6"/>
 <path d="M549 228 L551.5 231.5 L556.5 223.5"/>
 <circle cx="565" cy="227.5" r="2.5"/><path d="M560 232 H571 M565.5 230 V232"/>
 <circle cx="603.5" cy="189.5" r="2.5"/><path d="M598.5 194.3 H609 M603.5 192 V194.3"/>
 <path d="M607 241 L609.8 245.5 L612.6 241 M733.5 276 L737 271 L740 278 M735 275 H739"/>
</g>
<g fill="#f00">
 <circle cx="614.5" cy="187.5" r="2.3" fill-opacity=".8"/>
 <rect x="516" y="310.5" width="25" height="5"/><rect x="517.5" y="311.7" width="22" height="2.6" fill="url(#txtpat)"/>
 <rect x="521.5" y="326.5" width="19.5" height="5"/><rect x="523.0" y="327.7" width="16.5" height="2.6" fill="url(#txtpat)"/>
 <rect x="561" y="339.5" width="27.5" height="5.5"/><rect x="562.5" y="340.7" width="24.5" height="3.1" fill="url(#txtpat)"/>
 <rect x="575.5" y="352" width="19" height="5"/><rect x="577.0" y="353.2" width="16" height="2.6" fill="url(#txtpat)"/>
 <rect x="622" y="348.5" width="46" height="6"/><rect x="623.5" y="349.7" width="43" height="3.6" fill="url(#txtpat)"/>
 <rect x="719.5" y="322.5" width="28.5" height="6.5"/><rect x="721.0" y="323.7" width="25.5" height="4.1" fill="url(#txtpat)"/>
 <rect x="716.5" y="308.5" width="26.5" height="6.5"/><rect x="718.0" y="309.7" width="23.5" height="4.1" fill="url(#txtpat)"/>
 <rect x="716.5" y="292.5" width="18.5" height="5"/><rect x="718.0" y="293.7" width="15.5" height="2.6" fill="url(#txtpat)"/>
 <rect x="716.5" y="297" width="22.5" height="6"/><rect x="718.0" y="298.2" width="19.5" height="3.6" fill="url(#txtpat)"/>
 <rect x="747.5" y="223.5" width="16.5" height="6.5"/><rect x="749.0" y="224.7" width="13.5" height="4.1" fill="url(#txtpat)"/>
</g>
<g><rect x="645" y="210" width="3" height="12" fill="url(#txtpat2)"/><rect x="609" y="212" width="3" height="8" fill="url(#txtpat2)"/><rect x="743" y="245.7" width="3" height="19.2" fill="url(#txtpat2)"/><rect x="667" y="248" width="3.5" height="14" fill="url(#txtpat2)"/><rect x="650" y="262" width="10" height="4" fill="url(#txtpat2)"/><rect x="582" y="211" width="4" height="12" fill="url(#txtpat2)"/><rect x="627" y="223.5" width="7" height="3" fill="url(#txtpat2)"/><rect x="556.5" y="250" width="3" height="14" fill="url(#txtpat2)"/><rect x="549" y="240" width="4" height="3" fill="url(#txtpat2)"/><rect x="677" y="216" width="4" height="3" fill="url(#txtpat2)"/><rect x="700" y="230" width="6" height="2.5" fill="url(#txtpat2)"/><rect x="624" y="326" width="5" height="2.8" fill="url(#txtpat2)"/><rect x="577" y="326" width="5" height="2.8" fill="url(#txtpat2)"/><rect x="691.7" y="244" width="3.3" height="5.7" fill="url(#txtpat2)"/><rect x="701" y="262.8" width="3.5" height="8.5" fill="url(#txtpat2)"/><rect x="693" y="269" width="6" height="6" fill="url(#txtpat2)"/><rect x="708" y="272" width="6" height="5" fill="url(#txtpat2)"/></g>
<g fill="#f00"><rect x="532.0" y="169.0" width="11.0" height="3.5" fill="url(#txtpat2)"/><rect x="553.0" y="169.0" width="9.0" height="3.5" fill="url(#txtpat2)"/><rect x="595.0" y="169.0" width="19.0" height="3.5" fill="url(#txtpat2)"/><rect x="625.0" y="158.0" width="11.0" height="3.5" fill="url(#txtpat2)"/><rect x="598.0" y="176.5" width="12.0" height="3.0" fill="url(#txtpat2)"/><rect x="624.0" y="176.0" width="4.0" height="3.0" fill="url(#txtpat2)"/><rect x="670.0" y="169.5" width="15.0" height="3.0" fill="url(#txtpat2)"/><rect x="657.0" y="175.5" width="9.0" height="4.0" fill="url(#txtpat2)"/><rect x="699.0" y="199.5" width="5.0" height="3.0" fill="url(#txtpat2)"/><rect x="657.0" y="192.0" width="3.5" height="5.0" fill="url(#txtpat2)"/><rect x="753.0" y="215.0" width="3.5" height="4.0" fill="url(#txtpat2)"/><rect x="354.0" y="292.0" width="15.0" height="4.5" fill="url(#txtpat2)"/></g>
<g fill="#fff"><rect x="525" y="322" width="7" height="3"/><rect x="630" y="343" width="10" height="3"/><rect x="640" y="296" width="6" height="4" fill-opacity=".7"/></g>
<!--/BODY-->
</svg>
<svg class="a" style="left:0;top:484px" width="1082" height="49" viewBox="0 484 1082 49">
 <rect x="8" y="487.7" width="1066" height="2" fill="#fff"/>
 <rect x="8" y="490" width="1066" height="14" fill="#efefef"/>
 <line x1="10" y1="489.5" x2="42" y2="489.5" stroke="#1a1a1a" stroke-width="1"/>
 <line x1="96.5" y1="489.5" x2="1072" y2="489.5" stroke="#1a1a1a" stroke-width="1"/>
 <path d="M42 489.5 L96.6 489.5 L90.2 504 L48.5 504 Z" fill="#fff"/>
 <path d="M42 490 L48.5 504" stroke="#000" stroke-width="1.1"/>
 <path d="M96.6 490 L90.2 504" stroke="#000" stroke-width="1.1"/>
 <rect x="10" y="490" width="13.5" height="13.5" fill="#ececec"/>
 <rect x="24.5" y="490" width="15.5" height="13.5" fill="#ececec"/>
 <path d="M10 503.5 L23.5 503.5 L23.5 490" stroke="#8a8a8a" fill="none" stroke-width="1"/>
 <path d="M24.5 503.5 L40 503.5" stroke="#8a8a8a" fill="none" stroke-width="1"/>
 <line x1="40.5" y1="490" x2="40.5" y2="504" stroke="#111" stroke-width="1.5"/>
 <path d="M14 497.5 L18 494 L18 501 Z" fill="#000"/>
 <path d="M34 497.5 L30 494 L30 501 Z" fill="#000"/>
 <rect x="8" y="503.5" width="1066" height="1.5" fill="#f8f8f8"/>
 <rect x="8" y="505" width="1066" height="1.2" fill="#a0a0a0"/>
 <rect x="8" y="506.2" width="1066" height="1.3" fill="#fff"/>
 <rect x="8" y="507.5" width="1066" height="17.3" fill="#f0ecec"/>
 <line x1="781.5" y1="508" x2="781.5" y2="524" stroke="#c8c4c4" stroke-width="1"/>
 <rect x="8" y="523.3" width="1066" height="1.2" fill="#fff"/>
 <rect x="8" y="506.2" width="1.2" height="18" fill="#fff"/>
 <rect x="8" y="524.5" width="1066" height="1" fill="#40444a"/>
</svg>
<div class="a" style="left:52px;top:491px;font-size:11.6px;font-weight:bold;color:#000;white-space:nowrap">Model</div>
<svg class="a" style="left:990px;top:500px" width="90" height="28" viewBox="990 500 90 28">
<g fill="#e2b862" stroke="#fff" stroke-width="1.2" paint-order="stroke">
 <path d="M994.2 505 H1012.8 V508 H1004.5 L1003.5 510 H1011.3 V523.6 H996.3 V510 H1000 L1001 508 H994.2 Z M999.8 513 V515.2 H1007.8 V513 Z M999.8 518.8 V521 H1007.8 V518.8 Z"/>
 <path d="M1022 504.5 H1025 V506 H1034 V509 H1019 V510.5 H1021 V509.5 H1023.5 V510.5 H1027.5 V509.5 H1030 V510.5 H1033 V512.6 H1030 V516.5 H1019.5 V512.6 H1019 Q1019 520 1016.5 523.8 L1014.3 522.5 Q1016 518 1016 509 V506 H1022 Z M1023.5 512.6 V514.4 H1027.5 V512.6 Z"/>
 <path d="M1020 517.3 H1032 V519.2 L1029 521 L1034 522 L1033 523.8 L1026 522.3 L1018.5 523.8 L1018 522 L1023 521 L1020.5 519.2 Z"/>
 <path d="M1037.5 505 L1040 505.5 L1039.6 508 H1045.5 V510.6 H1042.2 V513.2 H1046 V515.8 H1042.5 L1046.3 521 L1044.3 522.5 L1041.2 518.5 L1037.8 523.2 L1035.8 521.8 L1039.5 515.8 H1036 V513.2 H1039.5 V510.6 H1038.5 L1037.5 512 L1035.8 511 Z"/>
 <path d="M1046.3 507 H1054.5 V522.5 H1046.3 Z M1049.3 510.6 V519 H1051.5 V510.6 Z"/>
 <path d="M1057.8 505.2 L1060.2 504.8 L1061.2 508.2 L1058.8 508.8 Z M1057 511.2 H1061.5 V519.5 Q1063 520.8 1066 520.8 H1076.5 V523.8 H1066 Q1061 523.8 1059 521.5 L1057.2 523.8 L1056.5 521.5 L1058.6 519.2 V514 H1057 Z"/>
 <path d="M1063.5 505.5 L1065.8 504.8 L1066.8 507 H1070.8 L1072 504.8 L1074.2 505.4 L1073.2 507 H1076 V509.4 H1070.5 L1070 510.4 H1074.3 V519.5 H1064.8 V510.4 H1067.5 L1067.6 509.4 H1062 V507 H1064.2 Z M1067.4 512.7 V513.6 H1071.8 V512.7 Z M1067.4 515.8 V516.8 H1071.8 V515.8 Z"/>
</g>
</svg>
<svg class="a" style="left:0;top:0" width="1082" height="533" viewBox="0 0 1082 533">
<path transform="translate(14.8 34.0) scale(1.000)" d="M6 0 V1.5 M0.5 2.5 H11.5 M3 3.5 Q5 9 11.5 11 M9 3.5 Q7 9 0.5 11" fill="none" stroke="#000" stroke-width="0.85"/>
<path transform="translate(26.8 34.0) scale(1.000)" d="M3 0 L0.5 5 M2 3 V11 M5.5 0.5 L4.5 4 M4.8 3.5 H11.5 M4 7 H12 M8 0 V11" fill="none" stroke="#000" stroke-width="0.85"/>
<text x="38.8" y="44.0" font-family="Liberation Sans" font-size="12.3" fill="#000">(F)</text>
<path transform="translate(67.0 34.0) scale(1.000)" d="M1 2 H11 M6 0 V5 M6 2.5 L1 5.5 M6 2.5 L11 5.5 M3.2 5.5 H8.8 V9.2 H3.2 Z M3.2 7.3 H8.8 M0.5 11 H11.5" fill="none" stroke="#000" stroke-width="0.85"/>
<path transform="translate(79.0 34.0) scale(1.000)" d="M10 0 L2 1 M2 2.2 H10 M1 3.8 H11 M5.5 1 Q4 6 1 8.5 M4 5 H10 V11 H4 Z M4 7 H10 M4 9 H10" fill="none" stroke="#000" stroke-width="0.85"/>
<text x="91.0" y="44.0" font-family="Liberation Sans" font-size="12.3" fill="#000">(V)</text>
<path transform="translate(121.0 34.0) scale(1.000)" d="M0 3 H4.5 M2.3 0 V11 M2.3 3.5 L0 8 M2.5 4.2 L4.5 6 M6 1 H11 M5 4.5 H12 M8.5 4.5 V10.5 L7.5 11 M6.5 7 L5.5 10 M10.5 7 L11.5 10" fill="none" stroke="#000" stroke-width="0.85"/>
<path transform="translate(133.0 34.0) scale(1.000)" d="M0.6 1 L1.6 2.2 M0.2 4.6 L1.2 5.6 M0 10.5 L2 7.5 M7.5 0 L8.5 1.5 M4 2.6 H11.5 M4.5 6.3 H11 M3.5 10.8 H12 M7.8 2.6 V10.8" fill="none" stroke="#000" stroke-width="0.85"/>
<text x="145.0" y="44.0" font-family="Liberation Sans" font-size="12.3" fill="#000">(M)</text>
<path transform="translate(179.0 34.0) scale(1.000)" d="M1 0.8 L2 2.4 M0 5 H2 V9 M0.5 10.5 Q2 9.5 4 10.5 H12 M4.3 1 L3.3 4 M4 2.6 H10.5 M7 0 V5 M3 5 H12 M6 5 Q6 8.5 3.5 9.5 M8.5 5 V8.6 H11.2" fill="none" stroke="#000" stroke-width="0.85"/>
<path transform="translate(191.0 34.0) scale(1.000)" d="M0 2 H4.5 M2.3 2 V9 M0 10 L5 8 M5.5 1 H12 M8.5 1 L7.5 3 M6 3 H11 V8.5 H6 Z M8.5 4 V8 M7.5 8.8 L5 11 M9.5 8.8 L12 11" fill="none" stroke="#000" stroke-width="0.85"/>
<text x="203.0" y="44.0" font-family="Liberation Sans" font-size="12.3" fill="#000">(O)</text>
<path transform="translate(235.0 34.0) scale(1.000)" d="M0 1.5 H6 M0 3.5 H6 M3 0 V5.5 L1 6 M7 0.5 V6 M7 0.5 H10 L8.5 2.5 L10 4 L8 5 M2 6.7 H10 V9.5 M2 6.7 V9.5 M6 5.5 V11" fill="none" stroke="#000" stroke-width="0.85"/>
<path transform="translate(247.0 34.0) scale(1.000)" d="M0.8 1 H5 V10 H0.8 Z M0.8 4 H5 M0.8 7 H5 M0 10.5 H6 M6.5 3.5 H11.5 V10 L10 11 M9 0 Q9 7 6 11" fill="none" stroke="#000" stroke-width="0.85"/>
<text x="259.0" y="44.0" font-family="Liberation Sans" font-size="12.3" fill="#000">(H)</text>
<path transform="translate(10.5 511.0) scale(0.958)" d="M3 0 V1.5 M0 2.2 H6 M1 3.6 H5 V6.4 H1 Z M3 6.4 V11 M1.5 8 L0.5 10 M4.5 8 L5.5 10 M6.5 4 H12 M9 0.5 V5 Q9 9 6.5 11 M9.6 5 V10 H12 M11 1 L11.6 2.5" fill="none" stroke="#000" stroke-width="0.89"/>
<path transform="translate(22.0 511.0) scale(0.958)" d="M2 0 L0.5 3 H3 L0.5 7 L4 6 M0.5 10.5 L4 9 M5 2.5 H11 M8 0 V5 M4.5 5 H12 M11 1 L6 7.5 M6.5 7.3 H11 V11 H6.5 Z M6.5 9.1 H11" fill="none" stroke="#000" stroke-width="0.89"/>
<path transform="translate(378.0 511.0) scale(0.958)" d="M3 0 V5 Q3 8 0 11 M3 6 L5.5 9 M8.5 0 V5 Q8.5 8 5.5 11 M8.5 5.5 L12 11" fill="none" stroke="#000" stroke-width="0.89"/>
<path transform="translate(389.5 511.0) scale(0.958)" d="M5.5 3.5 h1.2 v1.2 h-1.2 z M5.5 8.5 h1.2 v1.2 h-1.2 z" fill="none" stroke="#000" stroke-width="0.89"/>
<path transform="translate(454.5 511.0) scale(0.958)" d="M0 1 H7 M3.5 1 L1 4.6 L6 4 M5 3 L6 4.5 M1 7 H6 M3.5 4.5 V10.5 M0 10.5 H7 M8.5 2 V8 M11 0 V11 L10 10.5" fill="none" stroke="#000" stroke-width="0.89"/>
<path transform="translate(466.0 511.0) scale(0.958)" d="M5.5 3.5 h1.2 v1.2 h-1.2 z M5.5 8.5 h1.2 v1.2 h-1.2 z" fill="none" stroke="#000" stroke-width="0.89"/>
<path transform="translate(786.5 511.0) scale(0.958)" d="M9.5 0 L4.5 4 M0 5.5 H12 M3.5 0 V10.5 L6 9.2 M5.5 5.5 Q8 9 12 11" fill="none" stroke="#000" stroke-width="0.89"/>
<path transform="translate(798.0 511.0) scale(0.958)" d="M6 0 V1.5 M1.8 2 H12 M2 2 V6.5 Q2 9 0 11 M3.5 4 H11.5 M5.5 3 V6.6 M9 3 V6.6 M5.5 6.6 H9 M4 8 H10 Q8 10.5 3.5 11 M5.5 8.6 Q8 10.5 12 11" fill="none" stroke="#000" stroke-width="0.89"/>
<path transform="translate(809.5 511.0) scale(0.958)" d="M5.5 3.5 h1.2 v1.2 h-1.2 z M5.5 8.5 h1.2 v1.2 h-1.2 z" fill="none" stroke="#000" stroke-width="0.89"/>
</svg>
</body></html>
